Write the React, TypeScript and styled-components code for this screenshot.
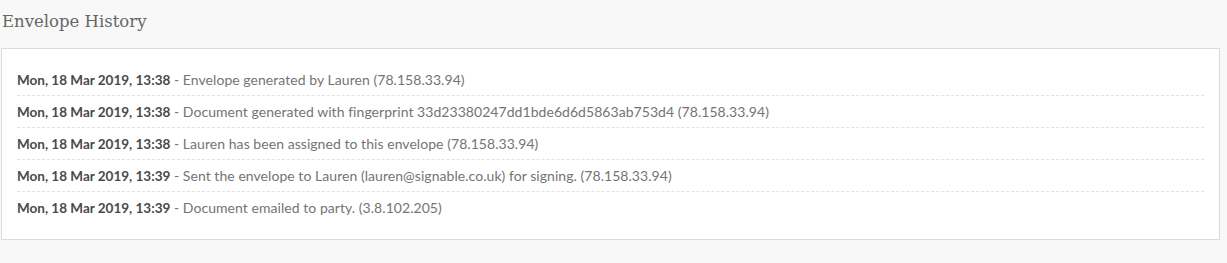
import styled, { createGlobalStyle } from "styled-components";

type Entry = {
  date: string;
  text: string;
};

const entries: Entry[] = [
  { date: "Mon, 18 Mar 2019, 13:38", text: "Envelope generated by Lauren (78.158.33.94)" },
  {
    date: "Mon, 18 Mar 2019, 13:38",
    text: "Document generated with fingerprint 33d23380247dd1bde6d6d5863ab753d4 (78.158.33.94)",
  },
  { date: "Mon, 18 Mar 2019, 13:38", text: "Lauren has been assigned to this envelope (78.158.33.94)" },
  {
    date: "Mon, 18 Mar 2019, 13:39",
    text: "Sent the envelope to Lauren (lauren@signable.co.uk) for signing. (78.158.33.94)",
  },
  { date: "Mon, 18 Mar 2019, 13:39", text: "Document emailed to party. (3.8.102.205)" },
];

function App() {
  return (
    <>
      <GlobalStyle />
      <Page>
        <Title>Envelope History</Title>
        <Panel>
          <List>
            {entries.map((entry, i) => (
              <Row key={i}>
                <DateText>{entry.date}</DateText> - {entry.text}
              </Row>
            ))}
          </List>
        </Panel>
      </Page>
    </>
  );
}

export default App;

const GlobalStyle = createGlobalStyle`
  html, body {
    margin: 0;
    padding: 0;
    background-color: #f8f8f8;
  }
`;

const Page = styled.div`
  width: 1220px;
  height: 263px;
  padding-left: 1px;
  box-sizing: border-box;
  background-color: #f8f8f8;
`;

const Title = styled.h2`
  margin: 0;
  padding: 12px 0 0 1px;
  height: 48px;
  box-sizing: border-box;
  font-family: "DejaVu Serif", serif;
  font-weight: 300;
  font-size: 16.5px;
  line-height: 20px;
  color: #666;
`;

const Panel = styled.div`
  background-color: #fff;
  border: 1px solid #dcdce0;
  padding: 15px;
`;

const List = styled.ul`
  list-style: none;
  margin: 0;
  padding: 0;
`;

const Row = styled.li`
  height: 32px;
  line-height: 31px;
  box-sizing: border-box;
  white-space: pre;
  font-family: "Lato", sans-serif;
  font-size: 14px;
  letter-spacing: 0.05px;
  color: #747474;
  border-bottom: 1px dashed #e2e2e2;

  &:last-child {
    border-bottom: none;
  }
`;

const DateText = styled.strong`
  font-weight: 700;
  font-size: 13.5px;
  letter-spacing: 0;
  color: #4a4a4a;
`;
